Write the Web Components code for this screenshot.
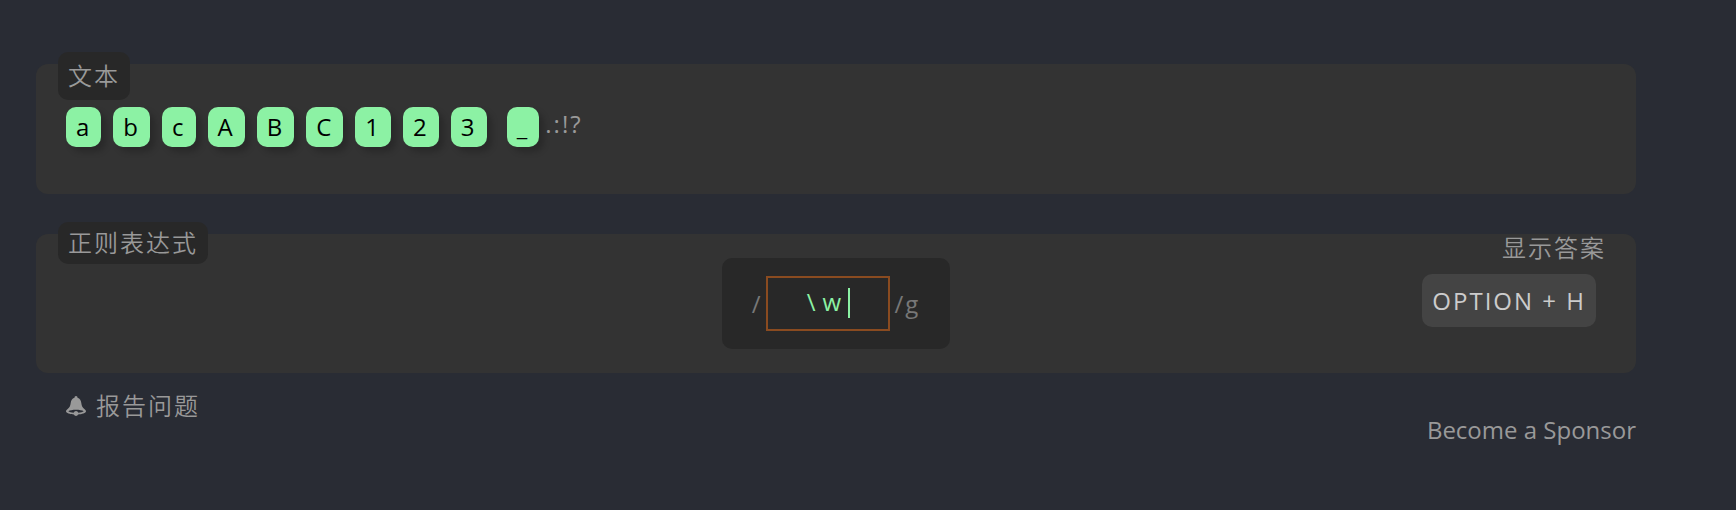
<!DOCTYPE html>
<html lang="zh-CN">
<head>
<meta charset="utf-8">
<meta name="viewport" content="width=device-width, initial-scale=1">
<title>正则表达式</title>
<style>
body { margin: 0; background: #292c34; color: #999; font: 24px/36px "Open Sans", "Noto Sans CJK SC", sans-serif; letter-spacing: 2px; }
</style>
</head>
<body>
<regex-lesson></regex-lesson>
<script>
class Base extends HTMLElement {
  constructor() {
    super();
    this.attachShadow({ mode: 'open' }).innerHTML = this.constructor.markup;
  }
}

customElements.define('lesson-panel', class extends Base {
  static markup = `<style>
    :host { display: block; position: relative; box-sizing: border-box; background: #333; border-radius: 12px; }
    .tag { position: absolute; top: -12px; left: 22px; padding: var(--tag-pad, 3px) 10px; background: #282828; border-radius: 10px; font-weight: 350; }
  </style><div class="tag"><slot name="tag"></slot></div><slot></slot>`;
});

customElements.define('match-key', class extends Base {
  static markup = `<style>
    :host { display: inline-block; vertical-align: middle; height: 40px; line-height: 40px; padding: 0 10px; margin: 0 6px; border-radius: 10px; background: #8cf2a4; color: #000; box-shadow: 5px 5px 6px rgba(0,0,0,.2); }
  </style><slot></slot>`;
});

customElements.define('key-cap', class extends Base {
  static markup = `<style>
    :host { display: block; }
    kbd { display: block; font: inherit; color: #ccc; background: #444; border-radius: 10px; padding: 9px 10px 8px; white-space: nowrap; }
  </style><kbd><slot></slot></kbd>`;
});

customElements.define('regex-field', class extends Base {
  static markup = `<style>
    :host { display: flex; align-items: center; box-sizing: border-box; padding: 18px 30px; background: #282828; border-radius: 10px; color: #777; }
    .mark { padding-top: 2px; }
    .box { position: relative; margin: 0 4px; }
    input { display: block; box-sizing: border-box; width: 124px; height: 55px; padding: 0 2px 4px 0; margin: 0; border: 2px solid #8a4b20; border-radius: 0; background: none; color: #8cf2a4; font: 500 24px "Open Sans", sans-serif; letter-spacing: 7px; text-align: center; outline: none; }
    .caret { position: absolute; left: 82px; top: 12px; width: 2px; height: 30px; background: #8cf2a4; }
  </style><span class="mark">/</span><div class="box"><input type="text" aria-label="正则表达式" value="\\w" spellcheck="false"><span class="caret"></span></div><span class="mark">/g</span>`;
});

customElements.define('report-link', class extends Base {
  static markup = `<style>
    :host { display: block; font-weight: 350; }
    a { display: flex; align-items: center; gap: 10px; color: inherit; text-decoration: none; }
    svg { width: 20px; height: 20px; fill: currentColor; display: block; }
  </style><a href="#report"><svg viewBox="0 0 20 20" aria-hidden="true"><path d="M10 0c1 0 1.500.8 1.500 1.700 2.500.8 3.500 2.600 3.800 5.300.3 3.200 1.300 4.500 3.300 6.200.8.700 1.400 1.300 1.400 2.100 0 1.900-4.200 3-7.900 3.200A2.200 2.200 0 0 1 10 20a2.200 2.200 0 0 1-2.100-1.500C4.200 18.300 0 17.200 0 15.300c0-.8.600-1.400 1.400-2.100 2-1.700 3-3 3.300-6.200.3-2.700 1.300-4.500 3.800-5.300C8.500.8 9 0 10 0z"/><path d="M2.300 15.200c1.500-1 4.500-1.500 7.700-1.500s6.200.5 7.700 1.500c-1 .9-3 1.300-5.300 1.500a2.600 2.600 0 0 0-4.800 0c-2.300-.2-4.300-.6-5.300-1.500z" fill="#292c34"/></svg><slot></slot></a>`;
});

customElements.define('regex-lesson', class extends Base {
  static markup = `<style>
    :host { display: block; padding: 64px 100px 60px 36px; }
    .text { --tag-pad: 6px; padding: 40px 24px 47px; }
    .text p { margin: 0; line-height: 40px; white-space: nowrap; }
    .regex { margin-top: 40px; padding: 24px 40px; display: grid; grid-template-columns: 1fr auto 1fr; align-items: start; }
    regex-field { grid-column: 2; }
    .answer { justify-self: end; display: flex; flex-direction: column; align-items: flex-end; margin: -28px 0 -30px; gap: 8px; }
    .answer span { margin-right: -10px; font-weight: 350; }
    footer { display: flex; justify-content: space-between; align-items: flex-start; padding: 15px 0 0 30px; }
    .sponsor { color: inherit; text-decoration: none; letter-spacing: 0; margin-top: 24px; }
  </style>
  <main>
    <lesson-panel class="text"><span slot="tag">文本</span><p><match-key>a</match-key><match-key>b</match-key><match-key>c</match-key><match-key>A</match-key><match-key>B</match-key><match-key>C</match-key><match-key>1</match-key><match-key>2</match-key><match-key>3</match-key> <match-key>_</match-key>.:!?</p></lesson-panel>
    <lesson-panel class="regex"><span slot="tag">正则表达式</span><regex-field></regex-field><div class="answer"><span>显示答案</span><key-cap>OPTION + H</key-cap></div></lesson-panel>
  </main>
  <footer><report-link>报告问题</report-link><a class="sponsor" href="#sponsor">Become a Sponsor</a></footer>`;
});
</script>
</body>
</html>
